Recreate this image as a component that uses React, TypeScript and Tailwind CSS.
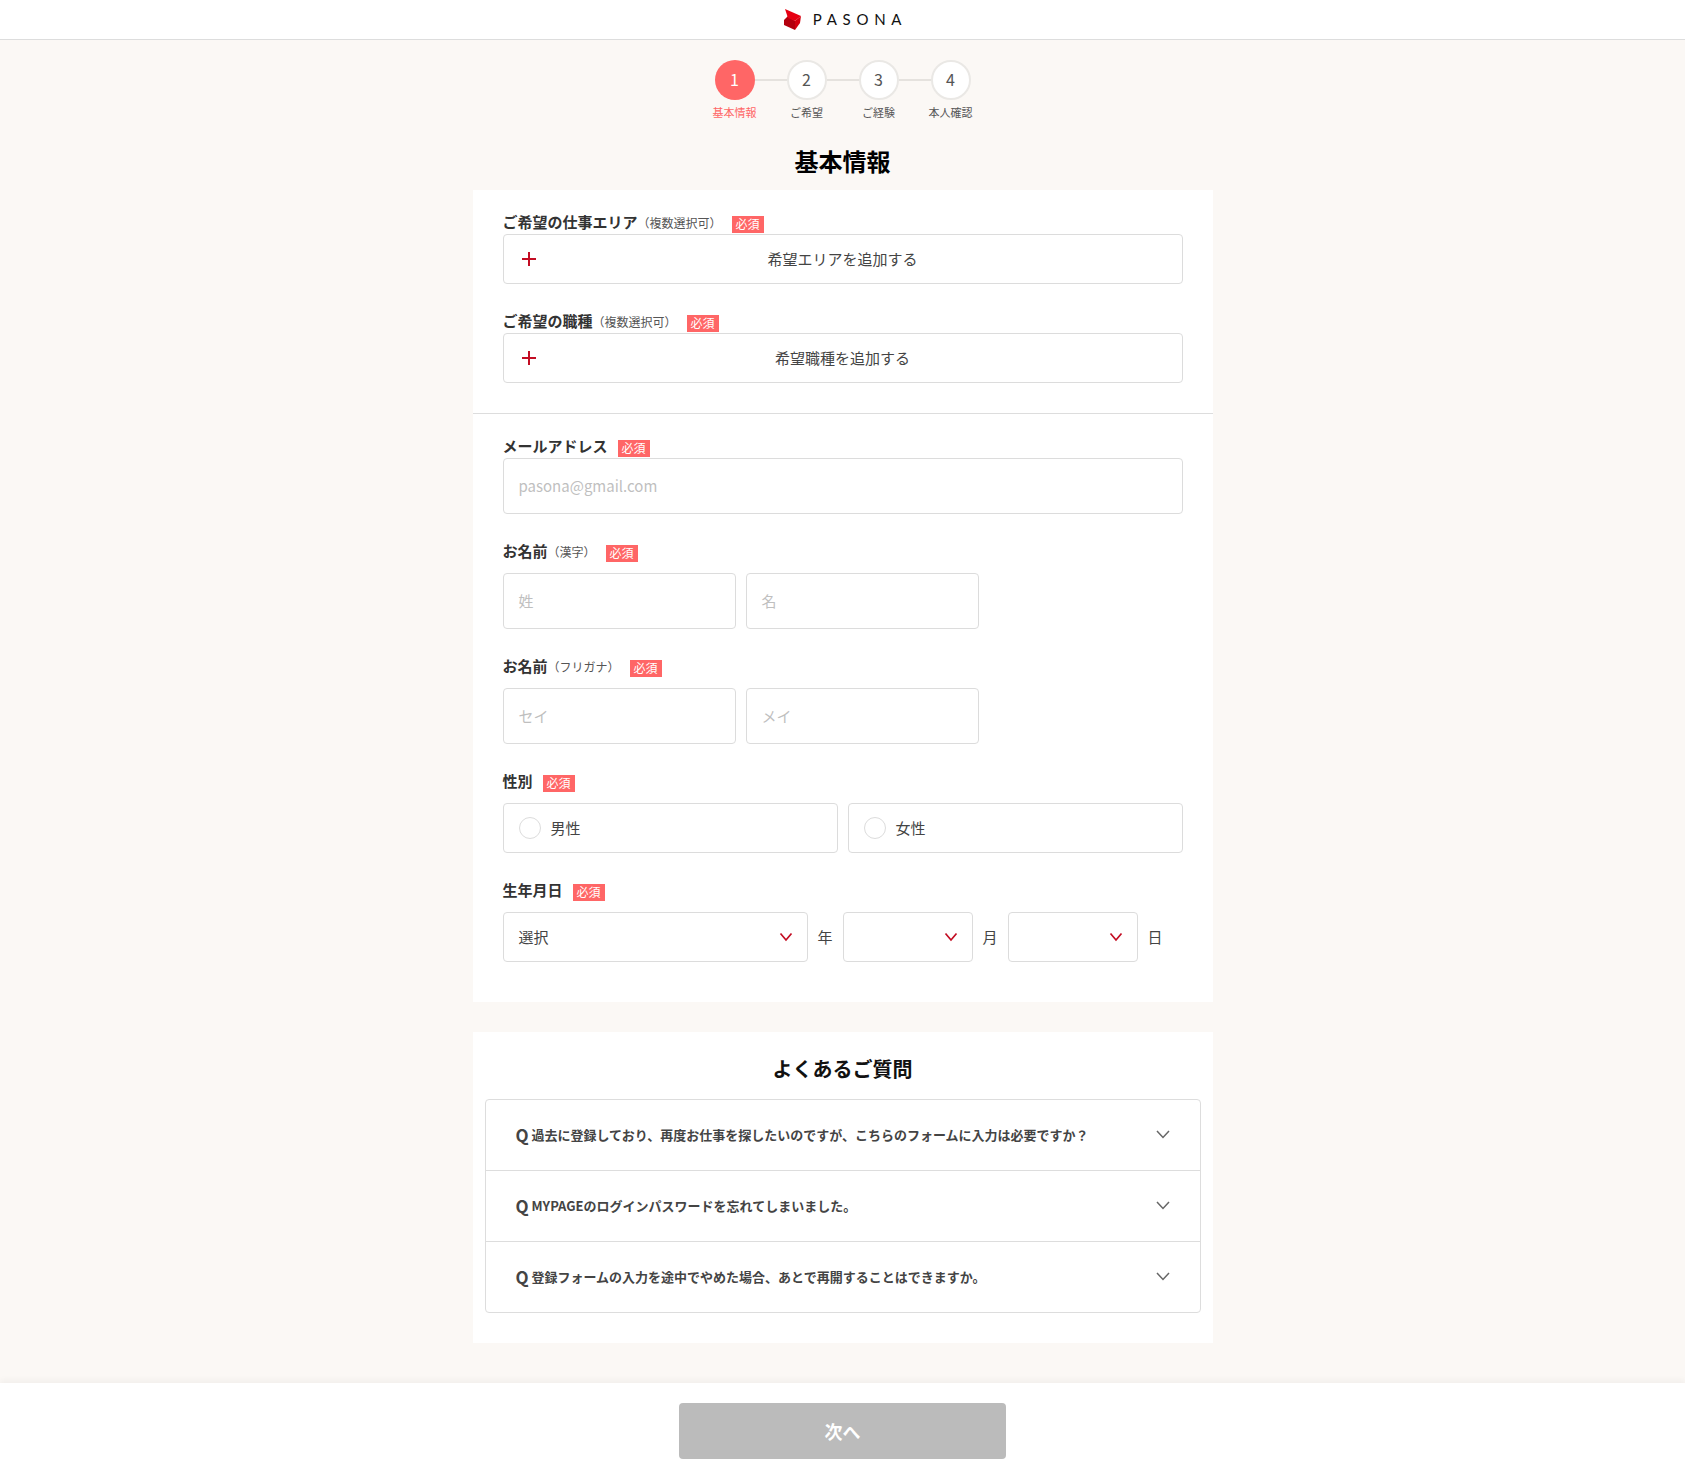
import React from 'react';

const steps = [
  { no: '1', label: '基本情報', active: true },
  { no: '2', label: 'ご希望', active: false },
  { no: '3', label: 'ご経験', active: false },
  { no: '4', label: '本人確認', active: false },
];

const faqs = [
  '過去に登録しており、再度お仕事を探したいのですが、こちらのフォームに入力は必要ですか？',
  'MYPAGEのログインパスワードを忘れてしまいました。',
  '登録フォームの入力を途中でやめた場合、あとで再開することはできますか。',
];

function Badge() {
  return (
    <span className="inline-flex h-[17px] w-[32px] items-center justify-center bg-[#ff6666] text-[12px] leading-none text-white">
      必須
    </span>
  );
}

function Label({ title, note, gap = 'ml-[10px]', box = 'h-[24px]' }: { title: string; note?: string; gap?: string; box?: string }) {
  return (
    <div className={`flex items-center ${box}`}>
      <span className="text-[15px] font-bold text-[#333]">{title}</span>
      {note && <span className="pt-[1px] text-[12px] text-[#555]">{note}</span>}
      <span className={gap}>
        <Badge />
      </span>
    </div>
  );
}

function AddButton({ text }: { text: string }) {
  return (
    <div className="relative flex h-[50px] items-center justify-center rounded-[4px] border border-[#dcdcdc] bg-white text-[15px] text-[#444]">
      <svg className="absolute left-[17px] top-[16px]" width="16" height="16" viewBox="0 0 16 16">
        <path d="M8 1v14M1 8h14" stroke="#c30d23" strokeWidth="2" fill="none" />
      </svg>
      {text}
    </div>
  );
}

function TextBox({ placeholder, className }: { placeholder: string; className: string }) {
  return (
    <div className={`flex h-[56px] items-center rounded-[4px] border border-[#dcdcdc] bg-white px-[15px] text-[15px] text-[#bfbfbf] ${className}`}>
      {placeholder}
    </div>
  );
}

function Radio({ text }: { text: string }) {
  return (
    <div className="flex h-[50px] flex-1 items-center rounded-[4px] border border-[#dcdcdc] bg-white pl-[15px] text-[15px] text-[#444]">
      <span className="mr-[10px] h-[22px] w-[22px] rounded-full border border-[#dcdcdc]" />
      {text}
    </div>
  );
}

function SelectBox({ text, className }: { text?: string; className: string }) {
  return (
    <div className={`flex h-[50px] items-center justify-between rounded-[4px] border border-[#dcdcdc] bg-white pl-[15px] pr-[14px] text-[15px] text-[#444] ${className}`}>
      <span>{text}</span>
      <svg width="14" height="10" viewBox="0 0 14 10">
        <path d="M1.5 1.5 7 8l5.5-6.5" stroke="#c30d23" strokeWidth="1.7" fill="none" />
      </svg>
    </div>
  );
}

export default function App() {
  return (
    <div className="flex min-h-[1479px] flex-col bg-[#fbf8f5] font-['Noto_Sans_CJK_JP','Noto_Sans',sans-serif]">
      <header className="flex h-[40px] items-center justify-center border-b border-[#dddddd] bg-white pl-[6px]">
        <svg className="mr-[1px]" width="17" height="21" viewBox="0 0 17 21">
          <path d="M4 7 11 12 11 21 0 16V11z" fill="#b3000e" />
          <path d="M11 12 17 7 16 14 11 21z" fill="#d4000f" />
          <path d="M1 0 17 7 11 12 4 9z" fill="#e60012" />
        </svg>
        <span className="ml-[11px] font-['Lato',sans-serif] text-[15px] font-normal tracking-[0.38em] text-[#111]">PASONA</span>
      </header>

      <div className="mt-[20px] flex justify-center">
        {steps.map((s, i) => (
          <div key={s.no} className="relative flex w-[72px] flex-col items-center">
            {i > 0 && <span className="absolute left-[-16px] top-[19px] h-[2px] w-[40px] bg-[#e5e2de]" />}
            <span
              className={
                s.active
                  ? 'relative flex h-[40px] w-[40px] items-center justify-center rounded-full bg-[#ff6666] pb-[2px] text-[16px] text-white'
                  : 'relative flex h-[40px] w-[40px] items-center justify-center rounded-full border-2 border-[#eae8e5] bg-white pb-[2px] text-[16px] text-[#555]'
              }
            >
              {s.no}
            </span>
            <span className={s.active ? 'mt-[3px] text-[11px] leading-[18px] text-[#ff6666]' : 'mt-[3px] text-[11px] leading-[18px] text-[#555]'}>
              {s.label}
            </span>
          </div>
        ))}
      </div>

      <h1 className="mt-[22px] text-center text-[24px] font-bold leading-[36px] text-black">基本情報</h1>

      <main className="mx-auto mt-[11px] w-[740px]">
        <section className="bg-white pb-[40px] pt-[20px]">
          <div className="flex flex-col gap-[25px] px-[30px] pb-[30px]">
            <div>
              <Label title="ご希望の仕事エリア" note="（複数選択可）" />
              <AddButton text="希望エリアを追加する" />
            </div>
            <div>
              <Label title="ご希望の職種" note="（複数選択可）" />
              <AddButton text="希望職種を追加する" />
            </div>
          </div>
          <div className="flex flex-col gap-[26px] border-t border-[#dddddd] px-[30px] pt-[20px]">
            <div>
              <Label title="メールアドレス" />
              <TextBox placeholder="pasona@gmail.com" className="w-full" />
            </div>
            <div>
              <Label title="お名前" note="（漢字）" box="h-[24px] pb-[2px]" />
              <div className="mt-[9px] flex gap-[10px]">
                <TextBox placeholder="姓" className="w-[233px]" />
                <TextBox placeholder="名" className="w-[233px]" />
              </div>
            </div>
            <div>
              <Label title="お名前" note="（フリガナ）" box="h-[24px] pb-[2px]" />
              <div className="mt-[9px] flex gap-[10px]">
                <TextBox placeholder="セイ" className="w-[233px]" />
                <TextBox placeholder="メイ" className="w-[233px]" />
              </div>
            </div>
            <div>
              <Label title="性別" box="h-[24px] pb-[2px]" />
              <div className="mt-[9px] flex gap-[10px]">
                <Radio text="男性" />
                <Radio text="女性" />
              </div>
            </div>
            <div>
              <Label title="生年月日" box="h-[24px] pb-[2px]" />
              <div className="mt-[9px] flex items-center text-[15px] text-[#444]">
                <SelectBox text="選択" className="w-[305px]" />
                <span className="w-[35px] text-center">年</span>
                <SelectBox className="w-[130px]" />
                <span className="w-[35px] text-center">月</span>
                <SelectBox className="w-[130px]" />
                <span className="w-[35px] text-center">日</span>
              </div>
            </div>
          </div>
        </section>

        <section className="mt-[30px] bg-white pb-[30px] pl-[12px] pr-[12px] pt-[22px]">
          <h2 className="text-center text-[20px] font-bold leading-[30px] text-[#111]">よくあるご質問</h2>
          <div className="mt-[15px] rounded-[4px] border border-[#dddddd]">
            {faqs.map((q, i) => (
              <div key={q} className={i > 0 ? 'flex h-[71px] items-center justify-between border-t border-[#dddddd] pl-[30px] pr-[30px]' : 'flex h-[70px] items-center justify-between pl-[30px] pr-[30px]'}>
                <div className="flex items-center text-[13px] font-bold text-[#444]">
                  <span className="mr-[4px] w-[12px] pb-[1px] text-[17px] leading-none">Q</span>
                  {q}
                </div>
                <svg className="mb-[2px]" width="14" height="9" viewBox="0 0 14 9">
                  <path d="M1 1l6 6.5L13 1" stroke="#666" strokeWidth="1.5" fill="none" />
                </svg>
              </div>
            ))}
          </div>
        </section>
      </main>

      <footer className="mt-[40px] flex flex-1 justify-center bg-white pt-[20px] shadow-[0_-3px_6px_rgba(0,0,0,0.04)]">
        <div className="flex h-[56px] w-[327px] items-center justify-center rounded-[4px] bg-[#bbbbbb] text-[18px] font-bold text-white">
          次へ
        </div>
      </footer>
    </div>
  );
}
